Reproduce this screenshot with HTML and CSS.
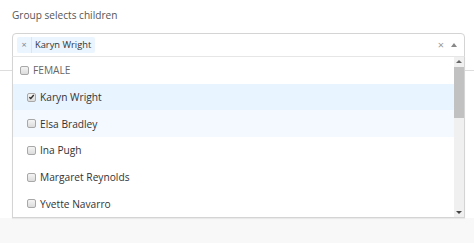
FILE: index.html
```html
<!DOCTYPE html>
<html>
<head>
<meta charset="utf-8">
<link rel="stylesheet" href="styles.css">
</head>
<body>
<div class="page">
  <div class="field">
    <div class="label">Group selects children</div>
    <div class="select">
      <div class="control">
        <div class="chip"><span class="chip-x">×</span><span class="chip-text">Karyn Wright</span></div>
        <div class="spacer"></div>
        <span class="clear">×</span>
        <span class="arrow"></span>
      </div>
      <div class="menu">
        <div class="list">
          <div class="opt group"><span class="cb"></span>FEMALE</div>
          <div class="opt child selected"><span class="cb checked"><svg viewBox="0 0 8 8" width="8" height="8"><path d="M1.5 4.2 L3.2 5.8 L6.6 1.8" fill="none" stroke="#333" stroke-width="1.6"/></svg></span>Karyn Wright</div>
          <div class="opt child hover"><span class="cb"></span>Elsa Bradley</div>
          <div class="opt child"><span class="cb"></span>Ina Pugh</div>
          <div class="opt child"><span class="cb"></span>Margaret Reynolds</div>
          <div class="opt child"><span class="cb"></span>Yvette Navarro</div>
        </div>
        <div class="scrollbar">
          <span class="sb-up"></span>
          <div class="sb-track"><div class="sb-thumb"></div></div>
          <span class="sb-down"></span>
        </div>
      </div>
    </div>
  </div>
  <div class="gap"></div>
  <div class="footer"></div>
</div>
</body>
</html>
```
FILE: styles.css
```css
html, body {
  margin: 0;
  padding: 0;
  background: #fff;
}
body {
  font-family: "Open Sans", "Noto Sans", sans-serif;
  color: #333;
  width: 474px;
  height: 243px;
  overflow: hidden;
}
.page {
  display: flex;
  flex-direction: column;
  height: 243px;
}
.field {
  padding: 6px 9px 0 12px;
  height: 64px;
  border-bottom: 1px solid #ddd;
  box-sizing: content-box;
}
.label {
  font-size: 10.1px;
  color: #555;
  line-height: 18px;
  height: 27px;
}
.select {
  position: relative;
  width: 453px;
}
.control {
  height: 22px;
  border: 1px solid #d4d4d4;
  border-radius: 4px 4px 0 0;
  display: flex;
  align-items: center;
  padding: 0 7px 0 4px;
  background: #fff;
}
.chip {
  display: flex;
  align-items: center;
  height: 16px;
  background: #ebf5ff;
  border-radius: 2px;
  font-size: 9.3px;
  color: #333;
}
.chip-x {
  width: 14px;
  text-align: center;
  color: #7a8a99;
  font-size: 9px;
  border-right: 1px solid #d6e6f5;
  line-height: 16px;
}
.chip-text {
  padding: 0 4px 0 3px;
  line-height: 16px;
}
.spacer { flex: 1; }
.clear {
  color: #999;
  font-size: 11px;
  line-height: 12px;
  margin-right: 7px;
}
.arrow {
  width: 0;
  height: 0;
  border-left: 3.5px solid transparent;
  border-right: 3.5px solid transparent;
  border-bottom: 4px solid #888;
}
.menu {
  position: absolute;
  left: 0;
  top: 23px;
  width: 451px;
  height: 160px;
  border: 1px solid #d4d4d4;
  border-top-color: #e6e6e6;
  background: #fff;
  display: flex;
  box-shadow: 0 1px 1px rgba(0,0,0,0.06);
  z-index: 2;
}
.list {
  flex: 1;
  display: flex;
  flex-direction: column;
}
.opt {
  height: 26.8px;
  display: flex;
  align-items: center;
  font-size: 10.2px;
  color: #333;
  padding-left: 7px;
}
.opt.group {
  color: #666;
}
.opt.child {
  padding-left: 14px;
}
.opt.selected { background: #e8f4ff; }
.opt.hover { background: #f4f9ff; }
.cb {
  width: 7px;
  height: 7px;
  border: 1px solid #a8a8a8;
  border-radius: 2px;
  background: linear-gradient(#f4f4f4, #dcdcdc);
  margin-right: 4px;
  display: inline-flex;
  align-items: center;
  justify-content: center;
  flex: none;
}
.cb.checked svg { display: block; }
.scrollbar {
  width: 10px;
  background: #f0f0f0;
  display: flex;
  flex-direction: column;
  align-items: center;
}
.sb-up, .sb-down {
  height: 10px;
  width: 10px;
  position: relative;
}
.sb-up::after, .sb-down::after {
  content: "";
  position: absolute;
  left: 2px;
  top: 3px;
  border-left: 3px solid transparent;
  border-right: 3px solid transparent;
}
.sb-up::after { border-bottom: 3px solid #666; }
.sb-down::after { border-top: 3px solid #444; top: 4px; }
.sb-track {
  flex: 1;
  width: 10px;
}
.sb-thumb {
  height: 51px;
  background: #c1c1c1;
}
.gap { flex: 1; }
.footer {
  height: 25px;
  background: #f8f8f8;
}
```
